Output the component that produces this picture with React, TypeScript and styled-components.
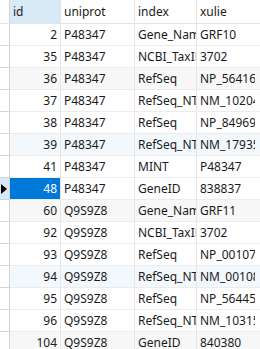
import React from 'react'
import styled, { createGlobalStyle } from 'styled-components'

const GlobalStyle = createGlobalStyle`
  html, body {
    margin: 0;
    padding: 0;
    background: #ffffff;
  }
  body {
    font-family: 'Noto Sans', 'Liberation Sans', sans-serif;
    font-size: 12px;
    color: #1b1b1b;
  }
`

type Row = {
  id: number
  uniprot: string
  index: string
  xulie: string
}

const rows: Row[] = [
  { id: 2, uniprot: 'P48347', index: 'Gene_Name', xulie: 'GRF10' },
  { id: 35, uniprot: 'P48347', index: 'NCBI_TaxID', xulie: '3702' },
  { id: 36, uniprot: 'P48347', index: 'RefSeq', xulie: 'NP_564161' },
  { id: 37, uniprot: 'P48347', index: 'RefSeq_NT', xulie: 'NM_102046' },
  { id: 38, uniprot: 'P48347', index: 'RefSeq', xulie: 'NP_849695' },
  { id: 39, uniprot: 'P48347', index: 'RefSeq_NT', xulie: 'NM_179354' },
  { id: 41, uniprot: 'P48347', index: 'MINT', xulie: 'P48347' },
  { id: 48, uniprot: 'P48347', index: 'GeneID', xulie: '838837' },
  { id: 60, uniprot: 'Q9S9Z8', index: 'Gene_Name', xulie: 'GRF11' },
  { id: 92, uniprot: 'Q9S9Z8', index: 'NCBI_TaxID', xulie: '3702' },
  { id: 93, uniprot: 'Q9S9Z8', index: 'RefSeq', xulie: 'NP_001077' },
  { id: 94, uniprot: 'Q9S9Z8', index: 'RefSeq_NT', xulie: 'NM_001083' },
  { id: 95, uniprot: 'Q9S9Z8', index: 'RefSeq', xulie: 'NP_564452' },
  { id: 96, uniprot: 'Q9S9Z8', index: 'RefSeq_NT', xulie: 'NM_103150' },
  { id: 104, uniprot: 'Q9S9Z8', index: 'GeneID', xulie: '840380' },
]

const SELECTED = 7

type Tint = 'none' | 'gray' | 'blue'

const tintFor = (i: number): Tint => {
  if (i % 6 === 2) return 'gray'
  if (i % 6 === 5) return 'blue'
  return 'none'
}

const tintColors: Record<Tint, string> = {
  none: '#ffffff',
  gray: '#f7f7f7',
  blue: '#f3f8fd',
}

const Grid = styled.div`
  width: 260px;
  height: 349px;
  overflow: hidden;
  display: flex;
  flex-direction: column;
  background: #ffffff;
`

const HeaderRow = styled.div`
  display: flex;
  height: 24px;
  flex-shrink: 0;
  box-sizing: border-box;
  border-bottom: 1px solid #e3e3e3;
`

const DataRow = styled.div<{ $tint: Tint }>`
  display: flex;
  height: 22px;
  flex-shrink: 0;
  background: ${(p) => tintColors[p.$tint]};
`

const Gutter = styled.div<{ $active?: boolean; $header?: boolean }>`
  width: 10px;
  flex-shrink: 0;
  box-sizing: border-box;
  border-right: 1px solid #d4d4d4;
  border-bottom: ${(p) => (p.$header ? 'none' : '1px solid #d4d4d4')};
  background: ${(p) => (p.$active ? '#d9e8f7' : '#ffffff')};
  display: flex;
  align-items: center;
  justify-content: flex-start;
  padding-left: 1px;
`

const Arrow = styled.div`
  width: 0;
  height: 0;
  border-top: 5px solid transparent;
  border-bottom: 5px solid transparent;
  border-left: 6px solid #000000;
`

const HeadCell = styled.div<{ $w: number; $sorted?: boolean; $last?: boolean }>`
  width: ${(p) => p.$w}px;
  flex-shrink: 0;
  box-sizing: border-box;
  border-right: ${(p) => (p.$last ? 'none' : '1px solid #e3e3e3')};
  background: ${(p) => (p.$sorted ? '#d9eaf7' : '#ffffff')};
  padding: ${(p) => (p.$last ? '0 0 0 3px' : '0 3px')};
  display: flex;
  align-items: center;
  white-space: nowrap;
  overflow: hidden;
`

const Cell = styled.div<{ $w: number; $right?: boolean; $selected?: boolean; $last?: boolean }>`
  width: ${(p) => p.$w}px;
  flex-shrink: 0;
  box-sizing: border-box;
  border-right: ${(p) => (p.$last ? 'none' : '1px solid #e6e6e6')};
  border-bottom: 1px solid #ececec;
  padding: ${(p) => (p.$last ? '0 0 0 3px' : '0 3px')};
  display: flex;
  align-items: center;
  justify-content: ${(p) => (p.$right ? 'flex-end' : 'flex-start')};
  white-space: nowrap;
  overflow: hidden;
  background: ${(p) => (p.$selected ? '#0078d7' : 'transparent')};
  color: ${(p) => (p.$selected ? '#ffffff' : 'inherit')};
`

const Filler = styled.div`
  flex: 1;
  border-bottom: 1px solid #ececec;
`

const columns = [
  { key: 'id', label: 'id', w: 51 },
  { key: 'uniprot', label: 'uniprot', w: 74 },
  { key: 'index', label: 'index', w: 62 },
  { key: 'xulie', label: 'xulie', w: 58 },
] as const

export default function App() {
  return (
    <>
      <GlobalStyle />
      <Grid>
        <HeaderRow>
          <Gutter $header />
          {columns.map((c) => (
            <HeadCell key={c.key} $w={c.w} $sorted={c.key === 'id'} $last={c.key === 'xulie'}>
              {c.label}
            </HeadCell>
          ))}
        </HeaderRow>
        {rows.map((r, i) => (
          <DataRow key={r.id} $tint={tintFor(i)}>
            <Gutter $active={i === SELECTED}>{i === SELECTED && <Arrow />}</Gutter>
            <Cell $w={51} $right $selected={i === SELECTED}>
              {r.id}
            </Cell>
            <Cell $w={74}>{r.uniprot}</Cell>
            <Cell $w={62}>{r.index}</Cell>
            <Cell $w={58} $last>
              {r.xulie}
            </Cell>
            <Filler />
          </DataRow>
        ))}
      </Grid>
    </>
  )
}
